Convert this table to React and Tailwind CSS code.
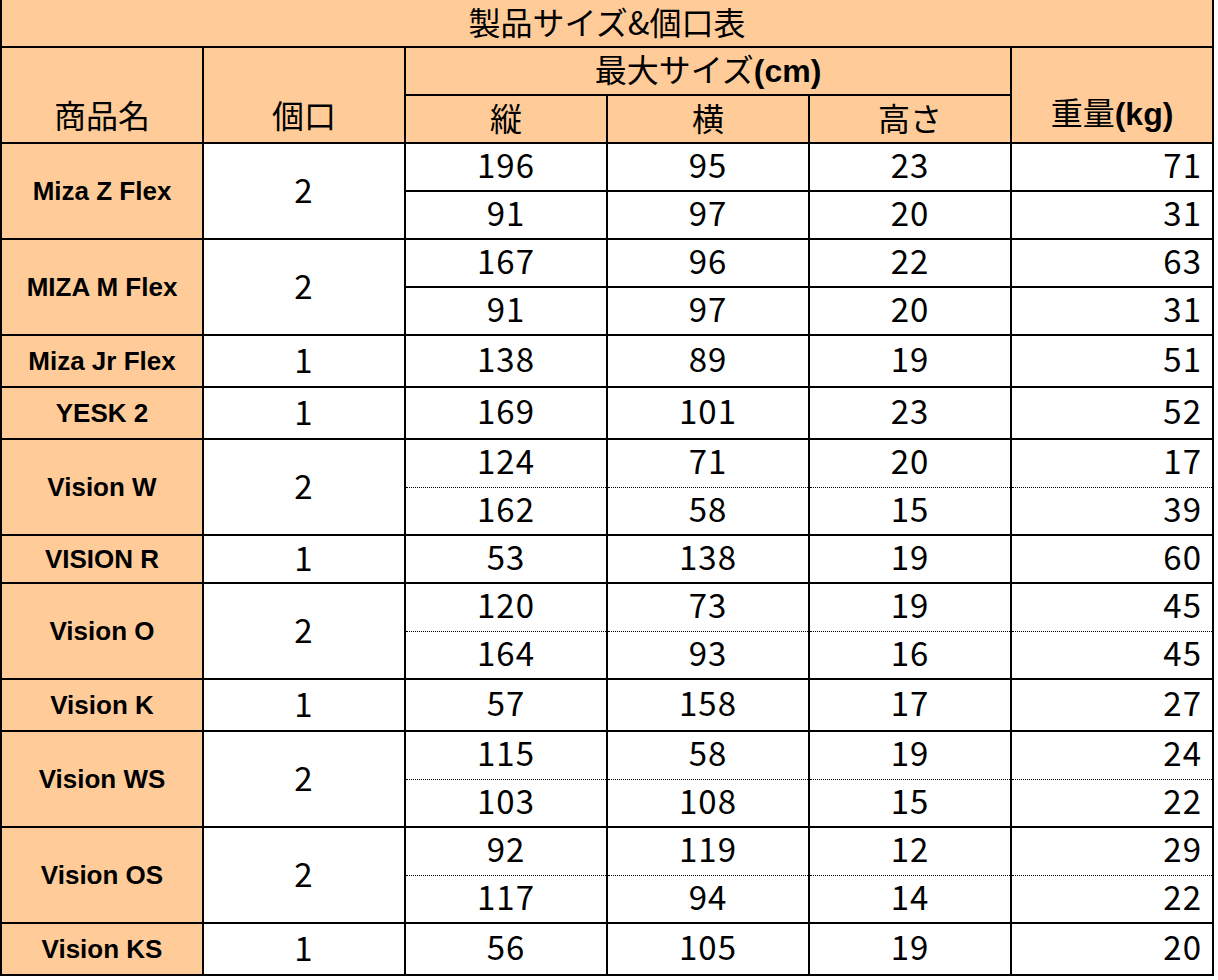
import React from 'react';

const groups = [
  { name: 'Miza Z Flex', qty: 2, rows: [[196, 95, 23, 71], [91, 97, 20, 31]], dotted: false },
  { name: 'MIZA M Flex', qty: 2, rows: [[167, 96, 22, 63], [91, 97, 20, 31]], dotted: false },
  { name: 'Miza Jr Flex', qty: 1, rows: [[138, 89, 19, 51]], tall: true },
  { name: 'YESK 2', qty: 1, rows: [[169, 101, 23, 52]], tall: true },
  { name: 'Vision W', qty: 2, rows: [[124, 71, 20, 17], [162, 58, 15, 39]], dotted: true },
  { name: 'VISION R', qty: 1, rows: [[53, 138, 19, 60]], tall: false },
  { name: 'Vision O', qty: 2, rows: [[120, 73, 19, 45], [164, 93, 16, 45]], dotted: true },
  { name: 'Vision K', qty: 1, rows: [[57, 158, 17, 27]], tall: true },
  { name: 'Vision WS', qty: 2, rows: [[115, 58, 19, 24], [103, 108, 15, 22]], dotted: true },
  { name: 'Vision OS', qty: 2, rows: [[92, 119, 12, 29], [117, 94, 14, 22]], dotted: true },
  { name: 'Vision KS', qty: 1, rows: [[56, 105, 19, 20]], tall: true },
];

const jp = "font-['Noto_Sans_CJK_JP',sans-serif]";
const latin = "font-['Liberation_Sans','Noto_Sans_CJK_JP',sans-serif]";

export default function App() {
  return (
    <div className="bg-white min-h-[980px] w-[1218px] text-black">
      <table className="border-collapse table-fixed w-[1214px]">
        <colgroup>
          <col className="w-[202px]" />
          <col className="w-[202px]" />
          <col className="w-[202px]" />
          <col className="w-[202px]" />
          <col className="w-[202px]" />
          <col className="w-[202px]" />
        </colgroup>
        <thead>
          {/* タイトル */}
          <tr className="h-[47px]">
            <th
              colSpan={6}
              className={`bg-[#ffcc99] border-2 border-t-0 border-black p-0 pb-[5px] text-[32px] font-normal leading-none text-center ${jp}`}
            >
              製品サイズ&amp;個口表
            </th>
          </tr>
          <tr className="h-[48px]">
            <th
              rowSpan={2}
              className={`bg-[#ffcc99] border-2 border-black p-0 pb-[12px] align-bottom text-[32px] font-normal leading-none ${jp}`}
            >
              商品名
            </th>
            <th
              rowSpan={2}
              className={`bg-[#ffcc99] border-2 border-black p-0 pb-[12px] align-bottom text-[32px] font-normal leading-none ${jp}`}
            >
              個口
            </th>
            <th
              colSpan={3}
              className={`bg-[#ffcc99] border-2 border-black p-0 pb-[3px] text-[32px] font-normal leading-none ${jp}`}
            >
              最大サイズ<span className={`font-bold ${latin}`}>(cm)</span>
            </th>
            <th
              rowSpan={2}
              className={`bg-[#ffcc99] border-2 border-black p-0 pb-[12px] align-bottom text-[32px] font-normal leading-none ${jp}`}
            >
              重量<span className={`font-bold ${latin}`}>(kg)</span>
            </th>
          </tr>
          <tr className="h-[48px]">
            {['縦', '横', '高さ'].map((label) => (
              <th
                key={label}
                className={`bg-[#ffcc99] border-2 border-black p-0 pb-[5px] text-[32px] font-normal leading-none ${jp}`}
              >
                {label}
              </th>
            ))}
          </tr>
        </thead>
        <tbody>
          {groups.map((g) =>
            g.rows.map((r, i) => {
              const single = g.rows.length === 1;
              const rowH = single ? (g.tall ? 'h-[52px]' : 'h-[48px]') : 'h-[48px]';
              // 2段目の上線は点線 (Vision系) か実線
              let cellBorder = 'border-2 border-black';
              if (g.dotted && i === 0) cellBorder = 'border-2 border-b border-black [border-bottom-style:dotted]';
              if (g.dotted && i === 1) cellBorder = 'border-2 border-t-0 border-black';
              return (
                <tr key={g.name + i} className={rowH}>
                  {i === 0 && (
                    <>
                      <td
                        rowSpan={g.rows.length}
                        className={`bg-[#ffcc99] border-2 border-black p-0 text-center text-[26px] font-bold leading-none ${latin}`}
                      >
                        {g.name}
                      </td>
                      <td
                        rowSpan={g.rows.length}
                        className={`bg-white border-2 border-black p-0 pb-[4px] text-center text-[33px] tracking-[1px] leading-none ${jp}`}
                      >
                        {g.qty}
                      </td>
                    </>
                  )}
                  {r.map((v, j) => (
                    <td
                      key={j}
                      className={`bg-white ${cellBorder} p-0 pb-[5px] text-[33px] tracking-[1px] leading-none ${jp} ${
                        j === 3 ? 'text-right pr-[10px]' : 'text-center'
                      }`}
                    >
                      {v}
                    </td>
                  ))}
                </tr>
              );
            })
          )}
        </tbody>
      </table>
    </div>
  );
}
